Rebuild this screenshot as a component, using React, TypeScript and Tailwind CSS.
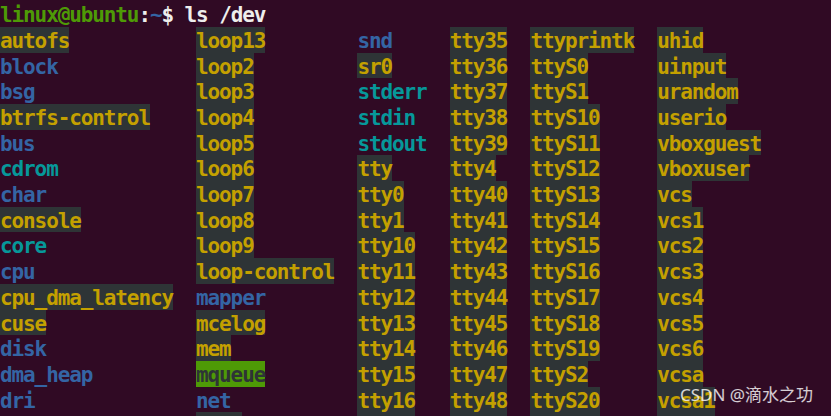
import React from "react";

type Kind = "Y" | "B" | "C" | "G";
type Entry = [string, Kind];

const cols: { w: string; items: Entry[] }[] = [
  {
    w: "w-[196px]",
    items: [
      ["autofs", "Y"], ["block", "B"], ["bsg", "B"], ["btrfs-control", "Y"], ["bus", "B"],
      ["cdrom", "C"], ["char", "B"], ["console", "Y"], ["core", "C"], ["cpu", "B"],
      ["cpu_dma_latency", "Y"], ["cuse", "Y"], ["disk", "B"], ["dma_heap", "B"], ["dri", "B"],
      ["fd", "C"],
    ],
  },
  {
    w: "w-[161.4px]",
    items: [
      ["loop13", "Y"], ["loop2", "Y"], ["loop3", "Y"], ["loop4", "Y"], ["loop5", "Y"],
      ["loop6", "Y"], ["loop7", "Y"], ["loop8", "Y"], ["loop9", "Y"], ["loop-control", "Y"],
      ["mapper", "B"], ["mcelog", "Y"], ["mem", "Y"], ["mqueue", "G"], ["net", "B"],
      ["null", "Y"],
    ],
  },
  {
    w: "w-[92.3px]",
    items: [
      ["snd", "B"], ["sr0", "Y"], ["stderr", "C"], ["stdin", "C"], ["stdout", "C"],
      ["tty", "Y"], ["tty0", "Y"], ["tty1", "Y"], ["tty10", "Y"], ["tty11", "Y"],
      ["tty12", "Y"], ["tty13", "Y"], ["tty14", "Y"], ["tty15", "Y"], ["tty16", "Y"],
      ["tty17", "Y"],
    ],
  },
  {
    w: "w-[80.7px]",
    items: [
      ["tty35", "Y"], ["tty36", "Y"], ["tty37", "Y"], ["tty38", "Y"], ["tty39", "Y"],
      ["tty4", "Y"], ["tty40", "Y"], ["tty41", "Y"], ["tty42", "Y"], ["tty43", "Y"],
      ["tty44", "Y"], ["tty45", "Y"], ["tty46", "Y"], ["tty47", "Y"], ["tty48", "Y"],
      ["tty49", "Y"],
    ],
  },
  {
    w: "w-[126.8px]",
    items: [
      ["ttyprintk", "Y"], ["ttyS0", "Y"], ["ttyS1", "Y"], ["ttyS10", "Y"], ["ttyS11", "Y"],
      ["ttyS12", "Y"], ["ttyS13", "Y"], ["ttyS14", "Y"], ["ttyS15", "Y"], ["ttyS16", "Y"],
      ["ttyS17", "Y"], ["ttyS18", "Y"], ["ttyS19", "Y"], ["ttyS2", "Y"], ["ttyS20", "Y"],
      ["ttyS21", "Y"],
    ],
  },
  {
    w: "flex-1",
    items: [
      ["uhid", "Y"], ["uinput", "Y"], ["urandom", "Y"], ["userio", "Y"], ["vboxguest", "Y"],
      ["vboxuser", "Y"], ["vcs", "Y"], ["vcs1", "Y"], ["vcs2", "Y"], ["vcs3", "Y"],
      ["vcs4", "Y"], ["vcs5", "Y"], ["vcs6", "Y"], ["vcsa", "Y"], ["vcsa1", "Y"],
      ["vcsa2", "Y"],
    ],
  },
];

const kindClass: Record<Kind, string> = {
  Y: "bg-[#2e3436] text-[#c4a000]",
  B: "text-[#3465a4]",
  C: "text-[#06989a]",
  G: "bg-[#4e9a06] text-[#2e3436]",
};

const mono = {
  fontFamily: '"DejaVu Sans Mono", "Liberation Mono", monospace',
};

export default function App() {
  return (
    <div
      className="relative w-[831px] h-[416px] overflow-hidden bg-[#300a24] pt-[1.3px] font-bold text-[21px] tracking-[-1.11px]"
      style={mono}
    >
      <div className="h-[25.7px] pt-[3px] leading-[22.7px] whitespace-pre text-[#eeeeec]">
        <span className="text-[#4e9a06]">linux@ubuntu</span>
        <span>:</span>
        <span className="text-[#3465a4]">~</span>
        <span>$ ls /dev</span>
      </div>
      <div className="flex">
        {cols.map((c, i) => (
          <div key={i} className={`flex flex-col shrink-0 ${c.w}`}>
            {c.items.map(([name, k]) => (
              <div key={name} className="h-[25.7px] flex">
                <span
                  className={`h-[25.7px] pt-[3px] leading-[22.7px] whitespace-pre ${kindClass[k]}`}
                >
                  {name}
                </span>
              </div>
            ))}
          </div>
        ))}
      </div>
      <div
        className="absolute left-[680px] top-[384px] text-[17px] leading-[22px] font-normal tracking-normal text-white/80 whitespace-pre"
        style={{ fontFamily: '"Noto Sans", "Noto Sans CJK SC", sans-serif' }}
      >
        CSDN @滴水之功
      </div>
    </div>
  );
}
